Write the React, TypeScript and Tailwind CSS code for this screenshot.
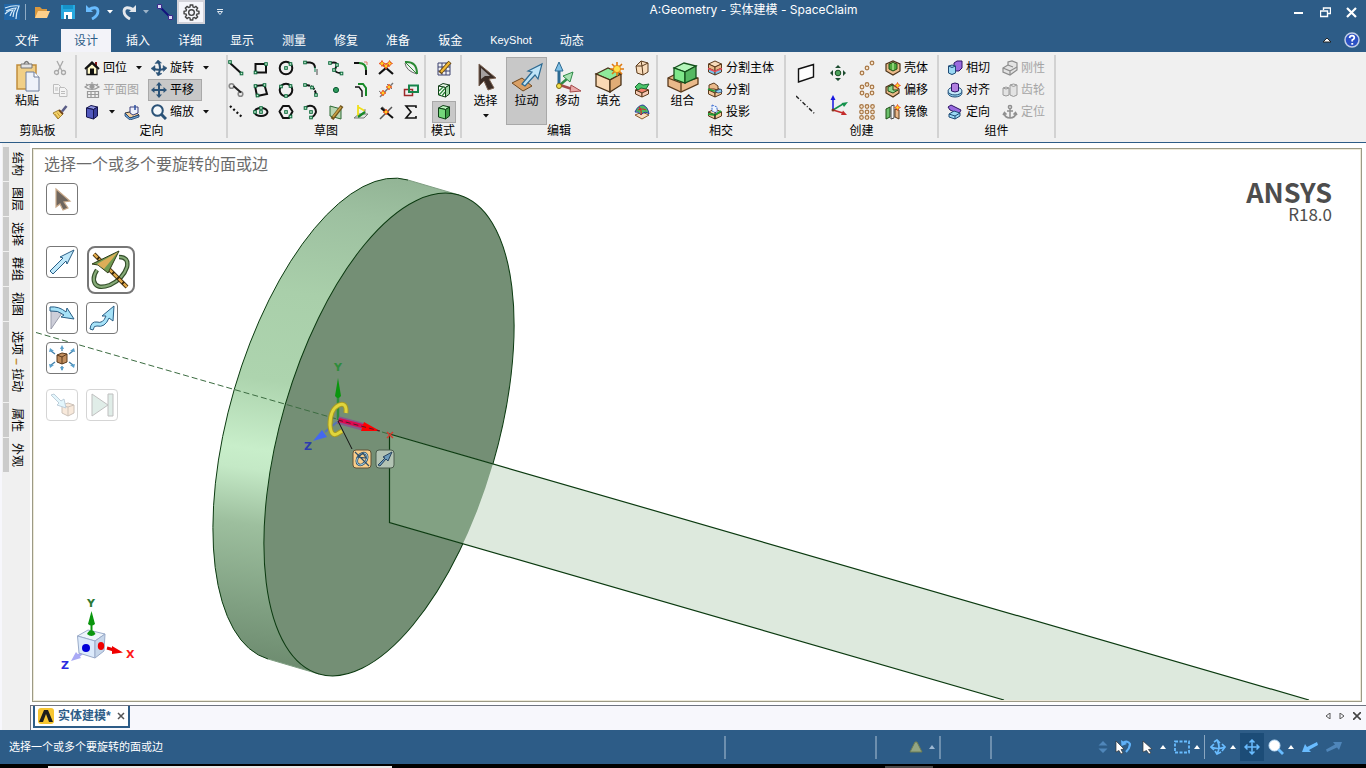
import type { ReactNode } from 'react';
import clsx from 'clsx';

const SANS = "font-['Liberation_Sans','Noto_Sans_CJK_SC',sans-serif]";

function Icon({ size = 16, box = 16, children }: { size?: number; box?: number; children: ReactNode }) {
  return (
    <svg width={size} height={size} viewBox={`0 0 ${box} ${box}`} fill="none" className="shrink-0" aria-hidden="true">
      {children}
    </svg>
  );
}

function Caret({ up = false, color = '#111' }: { up?: boolean; color?: string }) {
  return (
    <svg width="6" height="4" viewBox="0 0 6 4" className="shrink-0" aria-hidden="true">
      <path d={up ? 'M0 4L3 0L6 4Z' : 'M0 0H6L3 3.5Z'} fill={color} />
    </svg>
  );
}

// small green handle used by the sketch tools
function Dot({ x, y }: { x: number; y: number }) {
  return <rect x={x - 1.3} y={y - 1.3} width="2.6" height="2.6" fill="#c9efd5" stroke="#0d6b3c" strokeWidth="1" />;
}

function Spark({ x, y }: { x: number; y: number }) {
  return (
    <g>
      <path d={`M${x} ${y - 3}L${x + 1} ${y - 1}L${x + 3} ${y}L${x + 1} ${y + 1}L${x} ${y + 3}L${x - 1} ${y + 1}L${x - 3} ${y}L${x - 1} ${y - 1}Z`} fill="#ffd21f" stroke="#e8431c" strokeWidth=".8" />
    </g>
  );
}

function Cube({ top, left, right, stroke }: { top: string; left: string; right: string; stroke: string }) {
  return (
    <g stroke={stroke} strokeLinejoin="round">
      <path d="M2.500 4L7 1.500L13.500 3L9.500 5.500Z" fill={top} />
      <path d="M2.500 4L9.500 5.500V15L2.500 13Z" fill={left} />
      <path d="M9.500 5.500L13.500 3V12L9.500 15Z" fill={right} />
    </g>
  );
}

function Box({ fill = '#f3c79b', top = '#f8dcbc', y = 0 }: { fill?: string; top?: string; y?: number }) {
  return (
    <g stroke="#5a3a1c" strokeLinejoin="round" transform={`translate(0 ${y})`}>
      <path d="M1.500 4L8 1L14.500 4L8 7Z" fill={top} />
      <path d="M1.500 4V8L8 11V7Z" fill={fill} />
      <path d="M14.500 4V8L8 11V7Z" fill={fill} />
    </g>
  );
}

const icons = {
  home: (
    <>
      <path d="M11 2H13V6H11Z" fill="#8a1717" />
      <path d="M3 8V14.500H13V8L8 3.500Z" fill="#fff8c8" stroke="#111" strokeWidth="1.300" />
      <path d="M1 9L8 2.200L15 9" stroke="#111" strokeWidth="1.800" />
      <path d="M6 14V8.500H10V14Z" fill="#111" />
    </>
  ),
  plan: (
    <g stroke="#9a9a9a" strokeWidth="1.200">
      <path d="M1 5Q8 -1 15 5Q8 10 1 5Z" />
      <path d="M2 2L4 3.500M8 0V1.500M14 2L12 3.500" />
      <circle cx="8" cy="4.500" r="2" fill="#9a9a9a" />
      <path d="M3.500 9.500H14.500V15.500H3.500ZM3.500 12.500H14.500M7 9.500V15.500M11 9.500V15.500" />
    </g>
  ),
  cube: <Cube top="#8d93e0" left="#5158bd" right="#3a3f9c" stroke="#15154e" />,
  planeBook: (
    <>
      <path d="M1 9L10 7L15 11L6 14Z" fill="#f3cf9c" stroke="#333" />
      <path d="M1 9V12L6 16L15 13V11L6 14Z" fill="#6fa6d6" stroke="#1f3b66" strokeWidth=".8" />
      <path d="M6 9V3H14V9L9 11Z" fill="#eef0fb" stroke="#3a3f7c" />
      <path d="M11 1V6" stroke="#2b50a0" strokeWidth="1.500" />
    </>
  ),
  rotate: (
    <g stroke="#2a5277" strokeWidth="2">
      <path d="M2 8.500Q8 11 14 8.500" />
      <path d="M7.500 2Q10.500 8 7.500 14" />
      <path d="M0 8.500L4 5.500V11.500Z" fill="#2a5277" strokeWidth=".5" />
      <path d="M16 8L12 5.500L12.500 11.500Z" fill="#2a5277" strokeWidth=".5" />
      <path d="M4 3.500L7 0L10.500 3Z" fill="#2a5277" strokeWidth=".5" />
      <path d="M5 12.500L7 16L11 13.500Z" fill="#2a5277" strokeWidth=".5" />
    </g>
  ),
  pan: (
    <g fill="#2a5277">
      <path d="M7 2H9V14H7Z" />
      <path d="M2 7H14V9H2Z" />
      <path d="M8 0L11 3.500H5Z" />
      <path d="M8 16L5 12.500H11Z" />
      <path d="M0 8L3.500 5V11Z" />
      <path d="M16 8L12.500 11V5Z" />
    </g>
  ),
  zoom: (
    <>
      <circle cx="6.500" cy="6.500" r="5.300" fill="#f4f8fb" stroke="#2a5277" strokeWidth="2" />
      <path d="M10.500 10.500L15 15" stroke="#2a5277" strokeWidth="3" />
    </>
  ),
  scissors: (
    <g stroke="#a9a9a9" strokeWidth="1.300">
      <path d="M5 1L10 11M11 1L6 11" />
      <circle cx="4.500" cy="12.500" r="2" />
      <circle cx="11.500" cy="12.500" r="2" />
    </g>
  ),
  copy: (
    <g fill="#f4f4f4" stroke="#bdbdbd">
      <path d="M1.500 2.500H6.500L8.500 4.500V11.500H1.500Z" />
      <path d="M7.500 5.500H12.500L15 8V14.500H7.500Z" />
      <path d="M9 9.500H13M9 11.500H13M3 6H6M3 8H6" />
    </g>
  ),
  brush: (
    <>
      <path d="M1 9L7 6L11 10L6 15Z" fill="#f4d26b" stroke="#8a6a1c" strokeWidth=".8" />
      <path d="M3 10L6 14M5 8.500L8 12.500" stroke="#b88a20" strokeWidth=".8" />
      <path d="M7 6L11 10" stroke="#6b3f1a" strokeWidth="1.800" />
      <path d="M10 7.500L14.500 2" stroke="#5a5d86" strokeWidth="2.600" />
    </>
  ),
};

const sketchIcons: ReactNode[] = [
  // row 1
  <><path d="M2 3L14 14" stroke="#111" strokeWidth="2" /><Dot x={2} y={2} /><Dot x={13.500} y={13.500} /></>,
  <><path d="M2.500 4H13V12.500H2.500Z" stroke="#111" strokeWidth="2" /><Dot x={2.500} y={12.500} /><Dot x={13} y={4} /></>,
  <><circle cx="8" cy="8" r="6.300" stroke="#111" strokeWidth="2" /><Dot x={8} y={8} /><Dot x={12.500} y={4} /></>,
  <><path d="M2 2.500H7Q12 3 12 8" stroke="#111" strokeWidth="2" /><path d="M14 9V15" stroke="#888" strokeWidth="1.600" /><Dot x={2} y={2.500} /><path d="M12 7V12" stroke="#0d7b4c" /></>,
  <><path d="M2 3Q11 1 8 7Q5 13 13 13" stroke="#111" strokeWidth="1.800" /><Dot x={2} y={3} /><Dot x={9} y={5} /><Dot x={6} y={10} /><Dot x={13.500} y={13.500} /></>,
  <><path d="M1 3H7" stroke="#111" strokeWidth="2" /><path d="M6 3Q13 3 13 10" stroke="#188a28" strokeWidth="2" /><path d="M13 10V15" stroke="#111" strokeWidth="2" /><path d="M11 2H14V5" stroke="#d87c6c" /></>,
  <><path d="M1 14L8 8L15 14" stroke="#111" strokeWidth="2.200" /><path d="M3 2L8 8L13 2" stroke="#8a4a1a" strokeWidth="1.200" /><Spark x={4} y={3.500} /><Spark x={11.500} y={3.500} /><Spark x={8} y={6} /></>,
  <><path d="M2 3Q3 11 14 14" stroke="#666" /><path d="M2 2Q14 1 14 14" stroke="#2b8a34" strokeWidth="2" /><path d="M2 2L14 14" stroke="#2b8a34" /></>,
  // row 2
  <><circle cx="3.500" cy="4" r="2.300" stroke="#888" strokeWidth="1.600" /><circle cx="12.500" cy="12" r="2.300" stroke="#888" strokeWidth="1.600" /><path d="M5.500 4L13 10.500" stroke="#222" strokeWidth="2" /></>,
  <><path d="M2 4L11.500 3L14 12L4 14Z" stroke="#111" strokeWidth="2" /><Dot x={2.500} y={4} /><Dot x={11.500} y={3} /><Dot x={4.500} y={13.500} /></>,
  <><circle cx="8" cy="8" r="6.300" stroke="#111" strokeWidth="2" /><Dot x={3} y={4.500} /><Dot x={12.500} y={4} /><Dot x={8} y={14} /></>,
  <><path d="M2 3Q12 3 13 13" stroke="#111" strokeWidth="2" strokeDasharray="5 1" /><Dot x={2} y={3} /><Dot x={9} y={5.500} /><Dot x={13} y={13} /></>,
  <circle cx="8" cy="8" r="2.600" fill="#2f9a5c" stroke="#0d5b34" />,
  <><path d="M2 5H6L9 9V15" stroke="#111" strokeWidth="1.400" /><path d="M5 2H10L13 6V14" stroke="#188a28" strokeWidth="2" /></>,
  <><path d="M2 15L15 1" stroke="#777" strokeWidth="1.400" /><path d="M1 9L6 13M9 2L14 7" stroke="#777" /><Spark x={5} y={11} /><Spark x={11} y={5} /></>,
  <><path d="M1.500 7.500H9.500V13.500H1.500Z" stroke="#9c2a2a" strokeWidth="1.500" /><path d="M6 3.500H15V10H6Z" stroke="#16854a" strokeWidth="2" /></>,
  // row 3
  <path d="M2 2L15 14" stroke="#111" strokeWidth="2.200" strokeDasharray="2 2.500" />,
  <><ellipse cx="8" cy="8" rx="6.500" ry="4" stroke="#111" strokeWidth="2" /><Dot x={2} y={8} /><Dot x={8} y={8} /><Dot x={8} y={4} /></>,
  <><path d="M5 2H11L14.500 7.500L11 14H5L1.500 7.500Z" stroke="#111" strokeWidth="2" strokeLinejoin="round" /><Dot x={8} y={8} /><Dot x={12.500} y={12.500} /></>,
  <><path d="M2 4Q6 0 11 3Q16 9 8 14" stroke="#111" strokeWidth="2" /><Dot x={2.500} y={4} /><Dot x={8} y={8} /><Dot x={8} y={13.500} /></>,
  <><path d="M2 2L13 5V15L2 12Z" fill="#b9d6b2" stroke="#2d6a34" /><path d="M4 15L14 2" stroke="#70551c" strokeWidth="3.600" /><path d="M5 13L13 3" stroke="#c9a145" strokeWidth="1.600" /></>,
  <><path d="M1 14L6 10H15L11 14Z" fill="#dfe6df" stroke="#777" /><path d="M5 1V12M5 3L12 7" stroke="#f0e018" strokeWidth="1.800" /><path d="M12 5V9" stroke="#888" /><path d="M5 13L12 8" stroke="#188a28" strokeWidth="2.200" /></>,
  <><path d="M2 15L14 3M4 3L9 8" stroke="#555" strokeWidth="1.500" /><path d="M3 4L15 14" stroke="#111" strokeWidth="2" /><Spark x={8} y={8} /></>,
  <path d="M13 4V2H3L8 8L3 14H13V12" stroke="#111" strokeWidth="1.600" />,
];

const modeIcons: ReactNode[] = [
  <>
    <path d="M2 3H14V15H2ZM2 7H14M2 11H14M6 3V15M10 3V15" stroke="#3d4270" />
    <path d="M4 13L14 2" stroke="#6b4a12" strokeWidth="4" />
    <path d="M5 12L13.500 2.500" stroke="#f3bb36" strokeWidth="2.200" />
  </>,
  <>
    <Cube top="#e4f3e4" left="#ffffff" right="#9fd7a4" stroke="#123d18" />
    <path d="M3 9L7 5M3 13L9 6.500M6 14L9 10" stroke="#2d8a3a" strokeWidth="1.300" />
  </>,
  <Cube top="#baf3bd" left="#74d67b" right="#3f9a48" stroke="#0f4016" />,
];

function Group({ label, className, children }: { label: string; className: string; children: ReactNode }) {
  return (
    <section className={clsx('flex shrink-0 flex-col border-r-2 border-[#d2d2d2] pt-[2px]', className)}>
      <div className="flex h-[68px] items-start">{children}</div>
      <h2 className="text-center text-xs leading-[13px]">{label}</h2>
    </section>
  );
}

function SmallButton({ icon, label, disabled, active, menu }: { icon: ReactNode; label?: string; disabled?: boolean; active?: boolean; menu?: boolean }) {
  return (
    <div className="flex h-[22px] items-center">
      <button
        type="button"
        disabled={disabled}
        aria-label={label ? undefined : 'Tool'}
        className={clsx(
          'flex h-[22px] items-center gap-[3px] whitespace-nowrap border pl-[2px]',
          'text-xs',
          active ? 'border-[#a9a9a9] bg-[#c8c8c8] pr-[7px]' : 'border-transparent pr-[2px]',
          disabled && 'text-[#a5a5a5]'
        )}
      >
        <Icon>{icon}</Icon>
        {label}
      </button>
      {menu && (
        <button type="button" aria-label="More" className="px-[6px]">
          <Caret />
        </button>
      )}
    </div>
  );
}

function BigButton({ icon, label, active, menu }: { icon: ReactNode; label: string; active?: boolean; menu?: boolean }) {
  return (
    <button
      type="button"
      className={clsx('flex h-[68px] w-[41px] flex-col items-center border pt-[3px] text-xs leading-4', active ? 'border-[#a9a9a9] bg-[#c8c8c8]' : 'border-transparent')}
    >
      <Icon size={32} box={32}>
        {icon}
      </Icon>
      {label}
      {menu && (
        <span className="pt-[5px]">
          <Caret />
        </span>
      )}
    </button>
  );
}

function TitleBar() {
  return (
    <header className="flex h-6 items-center bg-[#2d5c87] text-white">
      <div className="flex flex-1 items-center">
        <span className="ml-1">
          <Icon>
            <path d="M0 0H16V16H0Z" fill="#2167a8" />
            <path d="M1 4Q9 1 15 2Q12 9 12 15M2 7Q8 4 12 4Q9 8 9 13M1 10Q5 6 9 6Q7 9 6 12" stroke="#d6ecfb" strokeWidth="1.200" />
          </Icon>
        </span>
        <span className="ml-[5px] h-4 w-px bg-[#8fabc4]" />
        <button type="button" aria-label="Open" className="ml-2">
          <Icon>
            <path d="M1 3H6L8 5H13V14H1Z" fill="#d9983e" />
            <path d="M4 7H16L13 14H1Z" fill="#ffd08a" />
          </Icon>
        </button>
        <button type="button" aria-label="Save" className="ml-[10px]">
          <Icon>
            <path d="M1 1H15V15H1Z" fill="#26a9e0" />
            <path d="M4 8H12V15H4Z" fill="#fff" />
            <path d="M6 11H8V15H6Z" fill="#1c6c96" />
            <path d="M3 1H13V5H3Z" fill="#1692c8" />
          </Icon>
        </button>
        <button type="button" aria-label="Undo" className="ml-[9px]">
          <Icon>
            <path d="M3 6Q12 1 13 7Q13 12 7 15" stroke="#69bcff" strokeWidth="2.800" />
            <path d="M1 1V8H8Z" fill="#69bcff" />
          </Icon>
        </button>
        <span className="ml-[6px]"><Caret color="#fff" /></span>
        <button type="button" aria-label="Redo" className="ml-2">
          <Icon>
            <path d="M13 6Q4 1 3 7Q3 12 9 15" stroke="#e3e7ec" strokeWidth="2.800" />
            <path d="M15 1V8H8Z" fill="#e3e7ec" />
          </Icon>
        </button>
        <span className="ml-[6px]"><Caret color="#9db4c9" /></span>
        <button type="button" aria-label="Line" className="ml-2">
          <Icon>
            <path d="M3 3L13 13" stroke="#12127c" strokeWidth="2" />
            <path d="M.5 .5H4.500V4.500H.5ZM11.500 11.500H15.500V15.500H11.500Z" fill="#dcd8f4" stroke="#3b2b8c" />
          </Icon>
        </button>
        <button type="button" aria-label="Options" className="ml-1 flex h-6 w-7 items-center justify-center border-2 border-[#d3d3da] bg-[#f5f6fb]">
          <svg width="17" height="17" viewBox="0 0 24 24" fill="none" stroke="#444" strokeWidth="2" aria-hidden="true">
            <path d="M10.300 2.500h3.400l.5 2.800 1.700.7 2.300-1.600 2.400 2.400-1.600 2.300.7 1.700 2.800.5v3.400l-2.800.5-.7 1.700 1.600 2.300-2.400 2.400-2.300-1.600-1.700.7-.5 2.800h-3.400l-.5-2.800-1.700-.7-2.300 1.600-2.400-2.400 1.600-2.300-.7-1.700-2.800-.5v-3.400l2.800-.5.7-1.700-1.600-2.300 2.400-2.400 2.300 1.600 1.700-.7z" transform="translate(0 -1)" />
            <circle cx="12" cy="12" r="4" />
          </svg>
        </button>
        <span className="ml-3">
          <svg width="6" height="6" viewBox="0 0 6 6" aria-hidden="true">
            <path d="M0 .5H6" stroke="#dfe8f0" />
            <path d="M.5 2.500H5.500L3 5.500Z" fill="none" stroke="#dfe8f0" />
          </svg>
        </span>
      </div>
      <h1 className="pb-1 pl-[150px] text-xs font-['Inter','Noto_Sans_CJK_SC',sans-serif]">A:Geometry - 实体建模 - SpaceClaim</h1>
      <div className="flex flex-1 items-center justify-end gap-[15px] pr-[9px]">
        <button type="button" aria-label="Minimize">
          <Icon size={11} box={11}><path d="M0 6H9" stroke="#fff" strokeWidth="2" /></Icon>
        </button>
        <button type="button" aria-label="Restore">
          <Icon size={11} box={11}><path d="M3.500 3V1H10.500V6.500H8M.5 4H7.500V9.500H.5Z" stroke="#fff" strokeWidth="1.400" /></Icon>
        </button>
        <button type="button" aria-label="Close">
          <Icon size={11} box={11}><path d="M1 1L10 10M10 1L1 10" stroke="#fff" strokeWidth="2.200" /></Icon>
        </button>
      </div>
    </header>
  );
}

const menuTabs = ['设计', '插入', '详细', '显示', '测量', '修复', '准备', '钣金', 'KeyShot', '动态'];

function MenuTabs() {
  return (
    <nav className="flex h-7 items-end bg-[#2d5c87] text-xs text-white">
      <button type="button" className="ml-[2px] mr-[9px] h-[23px] px-[13px]">文件</button>
      <div className="flex flex-1 gap-[2px]">
        {menuTabs.map((tab) => (
          <button
            key={tab}
            type="button"
            className={clsx(
              'h-[23px] whitespace-nowrap px-[13px]',
              tab === 'KeyShot' && 'text-[11px]',
              tab === '设计' && 'bg-[#f3f3f9] text-[#2d5c87]'
            )}
          >
            {tab}
          </button>
        ))}
      </div>
      <div className="flex h-6 items-center gap-3 pr-[6px]">
        <Icon size={10} box={10}><path d="M1 7L5 3L9 7Z" fill="#fff" stroke="#222" /></Icon>
        <button type="button" aria-label="Help">
          <Icon>
            <circle cx="8" cy="8" r="7" fill="#2b50c4" stroke="#c3cfe6" strokeWidth="1.500" />
            <path d="M5.500 6Q6 3.500 8.200 3.700Q10.500 4 10.300 6Q10 7.300 8.200 8V9.500" stroke="#fff" strokeWidth="1.700" />
            <path d="M7.300 11H9.200V12.700H7.300Z" fill="#fff" />
          </Icon>
        </button>
      </div>
    </nav>
  );
}

const circlePattern = (points: number[][]) => (
  <g fill="#f7e3cc" stroke="#a87846" strokeWidth="1.200">
    {points.map(([x, y]) => (
      <circle key={`${x}-${y}`} cx={x} cy={y} r="1.800" />
    ))}
  </g>
);

function Ribbon() {
  return (
    <div className="flex overflow-hidden border-b border-[#2d5c87] bg-[#f0f0f0] pb-1 pt-[3px] text-black">
      <Group label="剪贴板" className="w-[77px]">
        <button type="button" className="ml-[9px] flex h-[68px] w-9 flex-col items-center pt-[2px] text-xs leading-4">
          <Icon size={34} box={34}>
            <path d="M7 6H26V30H7Z" fill="#f1cf86" stroke="#c08d3c" strokeWidth="1.500" />
            <path d="M11 5H22V9H11Z" fill="#e4e4e4" stroke="#777" />
            <path d="M14 5Q16.500 0 19 5" stroke="#777" strokeWidth="1.500" />
            <path d="M16 13H24L29 18V32H16Z" fill="#eef2fa" stroke="#6d7c9c" />
            <path d="M24 13V18H29" fill="#fff" stroke="#6d7c9c" />
          </Icon>
          粘贴
        </button>
        <div className="ml-1 flex flex-col">
          <SmallButton icon={icons.scissors} disabled />
          <SmallButton icon={icons.copy} disabled />
          <SmallButton icon={icons.brush} />
        </div>
      </Group>

      <Group label="定向" className="w-[151px]">
        <div className="ml-1 flex w-[67px] shrink-0 flex-col">
          <SmallButton icon={icons.home} label="回位" menu />
          <SmallButton icon={icons.plan} label="平面图" disabled />
          <div className="flex">
            <SmallButton icon={icons.cube} menu />
            <SmallButton icon={icons.planeBook} />
          </div>
        </div>
        <div className="flex flex-col">
          <SmallButton icon={icons.rotate} label="旋转" menu />
          <SmallButton icon={icons.pan} label="平移" active />
          <SmallButton icon={icons.zoom} label="缩放" menu />
        </div>
      </Group>

      <Group label="草图" className="w-[198px]">
        <div className="grid grid-cols-8 gap-x-[9px]">
          {sketchIcons.map((icon, i) => (
            <button key={i} type="button" aria-label="Sketch tool" className="flex h-[22px] w-4 items-center">
              <Icon>{icon}</Icon>
            </button>
          ))}
        </div>
      </Group>

      <Group label="模式" className="w-9">
        <div className="ml-auto mr-1 flex flex-col">
          {modeIcons.map((icon, i) => (
            <button
              key={i}
              type="button"
              aria-label="Mode"
              className={clsx('flex h-[22px] w-6 items-center justify-center border', i === 2 ? 'border-[#a9a9a9] bg-[#c8c8c8]' : 'border-transparent')}
            >
              <Icon>{icon}</Icon>
            </button>
          ))}
        </div>
      </Group>

      <Group label="编辑" className="w-[196px]">
        <div className="flex pl-[3px]">
          <BigButton
            label="选择"
            menu
            icon={
              <>
                <path d="M9 3L26 17L19 18L24 27L18 29L14 20L9 25Z" fill="#3a2c26" stroke="#7b6252" />
                <path d="M11 7L20 15L15 15L11 18Z" fill="#a49f9f" />
              </>
            }
          />
          <BigButton
            label="拉动"
            active
            icon={
              <>
                <path d="M1 22L11 17L21 25L12 30Z" fill="#d9a066" stroke="#6f4a22" />
                <path d="M11 23L21 11L17 10L31 3L27 18L24 14L14 25Z" fill="#bfe4f7" stroke="#2c6a92" strokeWidth="1.200" />
              </>
            }
          />
          <BigButton
            label="移动"
            icon={
              <>
                <path d="M7 25V8" stroke="#2c6a92" strokeWidth="3" />
                <path d="M3 10L7 1L11 10Z" fill="#7fc0e6" stroke="#2c6a92" />
                <path d="M8 24L16 17" stroke="#2e8a48" strokeWidth="2.400" />
                <path d="M11 15L21 11L18 21Z" fill="#a9e2b3" stroke="#2e8a48" />
                <path d="M8 24L20 28" stroke="#a34a4a" strokeWidth="2.400" />
                <path d="M19 24L29 30L18 31Z" fill="#eba9a9" stroke="#a34a4a" />
                <circle cx="7" cy="25" r="2.500" fill="#f3e04a" stroke="#7c6b14" />
              </>
            }
          />
          <BigButton
            label="填充"
            icon={
              <>
                <path d="M3 13L15 7L28 13L17 19Z" fill="#8fe99a" stroke="#4a3218" strokeWidth="1.300" />
                <path d="M3 13V25L17 31V19Z" fill="#fad9b4" stroke="#4a3218" strokeWidth="1.300" />
                <path d="M28 13V24L17 31V19Z" fill="#e0ac76" stroke="#4a3218" strokeWidth="1.300" />
                <path d="M24 1V15M17 8H31M19 3L29 13M29 3L19 13" stroke="#e07a10" strokeWidth="1.600" />
                <circle cx="24" cy="8" r="3.600" fill="#ffe04a" stroke="#e88a14" />
              </>
            }
          />
        </div>
        <div className="ml-[2px] flex flex-col">
          <SmallButton icon={<><path d="M2 6L7 1L14 3V12L9 15L3 13Z" fill="#f8dcbc" stroke="#5a3a1c" strokeLinejoin="round" /><path d="M2 6L8 6L14 3M8 6L9 15M7 1L8 6" stroke="#5a3a1c" /></>} />
          <SmallButton icon={<><Box y={4} fill="#f6c9b4" top="#f0806c" /><path d="M1 5L5 1L9 3L15 2L12 7L7 6L4 8Z" fill="#4ac46a" stroke="#1c6b34" /></>} />
          <SmallButton icon={<><path d="M1 11L8 8L15 11L8 15Z" fill="#f8dcbc" stroke="#8a5a2c" /><path d="M1 8Q4 1 9 1Q14 3 15 10Q11 6 7 11Q5 7 1 8Z" fill="#4ab860" stroke="#283c9c" /><path d="M4 6Q8 4 12 6M5 3Q8 6 7 11" stroke="#d02c2c" strokeWidth="1.200" /></>} />
        </div>
      </Group>

      <Group label="相交" className="w-32">
        <div className="pl-1">
          <BigButton
            label="组合"
            icon={
              <>
                <path d="M1 17L7 14L31 17V23L14 31L1 25Z" fill="#eab98a" stroke="#5a3a1c" strokeWidth="1.300" />
                <path d="M1 17L14 22V31M14 22L31 17" stroke="#5a3a1c" strokeWidth="1.300" />
                <path d="M7 7L17 2L29 5L18 11Z" fill="#b4f5ba" stroke="#14501c" strokeWidth="1.300" />
                <path d="M7 7V18L18 22V11Z" fill="#7fe78a" stroke="#14501c" strokeWidth="1.300" />
                <path d="M29 5V17L18 22V11Z" fill="#56b862" stroke="#14501c" strokeWidth="1.300" />
              </>
            }
          />
        </div>
        <div className="ml-[1px] flex flex-col">
          <SmallButton label="分割主体" icon={<><Box y={4} fill="#7cc4ee" top="#e8606a" /><Box y={0} fill="#eab98a" /><path d="M1 8.500L8 11.500L15 8.500" stroke="#e8505a" strokeWidth="1.500" /></>} />
          <SmallButton label="分割" icon={<><Box y={4} /><path d="M2 3L7 1L11 4V8L7 7L2 7Z" fill="#eab98a" stroke="#5a3a1c" /><path d="M1 7L7 9L14 9" stroke="#1ca034" strokeWidth="1.600" /><path d="M8 9L14 7L15 10L11 11Z" fill="#8fd0f4" stroke="#1f3b66" strokeWidth=".7" /></>} />
          <SmallButton label="投影" icon={<><Box y={4} /><path d="M5 1L10 3V9L5 7Z" fill="#eef6ff" stroke="#3b6bd0" strokeDasharray="2 1" /><path d="M1 10L8 11L14 7" stroke="#1ca034" strokeWidth="2" /><path d="M8 8V15" stroke="#222" /></>} />
        </div>
      </Group>

      <Group label="创建" className="w-[153px]">
        <div className="grid grid-cols-2 gap-x-[12px] gap-y-[12px] pl-[10px] pt-[6px]">
          <button type="button" aria-label="Plane"><Icon size={20} box={20}><path d="M2.500 6L17.500 1.500V14L2.500 19Z" fill="#fdfdfd" stroke="#111" strokeWidth="1.400" /></Icon></button>
          <button type="button" aria-label="Point">
            <Icon size={20} box={20}>
              <circle cx="10" cy="10" r="2.800" fill="#4ca45c" stroke="#174c20" />
              <path d="M10 2L13 5H7ZM10 18L7 15H13ZM2 10L5 7V13ZM18 10L15 13V7Z" fill="#1d4c30" />
            </Icon>
          </button>
          <button type="button" aria-label="Axis"><Icon size={20} box={20}><path d="M0 1L19 19" stroke="#222" strokeWidth="1.400" strokeDasharray="4 2 1 2" /></Icon></button>
          <button type="button" aria-label="Origin">
            <Icon size={20} box={20}>
              <path d="M5 15V4" stroke="#1616e0" strokeWidth="1.500" />
              <path d="M5 0L7.500 5H2.500Z" fill="#1616e0" />
              <path d="M5 15L15 9" stroke="#14924c" strokeWidth="1.500" />
              <path d="M20 7L16 12L13.500 8Z" fill="#14924c" />
              <path d="M5 15L15 18" stroke="#c42c2c" strokeWidth="1.500" />
              <path d="M19 20L13 20L15 15.500Z" fill="#c42c2c" />
              <circle cx="5" cy="15" r="1.500" fill="#7a3a1c" />
            </Icon>
          </button>
        </div>
        <div className="ml-2 flex flex-col">
          <SmallButton icon={circlePattern([[3, 13], [8, 8], [13, 3]])} />
          <SmallButton icon={circlePattern([[8, 2.500], [13, 5], [13, 11], [8, 13.500], [3, 11], [3, 5]])} />
          <SmallButton icon={circlePattern([[2.500, 2.500], [8, 2.500], [13.500, 2.500], [2.500, 8], [8, 8], [13.500, 8], [2.500, 13.500], [8, 13.500], [13.500, 13.500]])} />
        </div>
        <div className="ml-1 flex flex-col">
          <SmallButton label="壳体" icon={<><path d="M1 4L8 1L15 4V11L8 15L1 11Z" fill="#eab98a" stroke="#4a3218" strokeWidth="1.200" /><path d="M4 4L8 2.500L12 4V9L8 11L4 9Z" fill="#4fa83c" stroke="#1e5016" /><path d="M8 3V10" stroke="#a4e08c" strokeWidth="1.500" /></>} />
          <SmallButton label="偏移" icon={<><path d="M1 5L7 2L14 7V11L8 15L1 11Z" fill="#eab98a" stroke="#4a3218" strokeWidth="1.200" /><path d="M3 5L8 3V8L13 8L8 11L3 9Z" fill="#8fd68c" stroke="#1e5016" /><Spark x={12.500} y={3.500} /></>} />
          <SmallButton label="镜像" icon={<><path d="M1 5L5 3V13L1 15Z" fill="#6cc06c" stroke="#1e5016" /><path d="M6 2L9 1V14L6 15Z" fill="#f5f5f5" stroke="#444" /><path d="M10 5L14 6V15L10 13Z" fill="#eab98a" stroke="#5a3a1c" /><Spark x={12.500} y={3.500} /></>} />
        </div>
      </Group>

      <Group label="组件" className="w-[117px]">
        <div className="ml-[5px] flex flex-col">
          <SmallButton label="相切" icon={<><path d="M7 3L10 1H15V8L12 11H7Z" fill="#9a6be0" stroke="#2c1464" /><path d="M1.500 6V13Q5 16 8.500 13V6Q5 4 1.500 6Z" fill="#9ad8f4" stroke="#1f4b76" /><path d="M1.500 6Q5 9 8.500 6" stroke="#1f4b76" /></>} />
          <SmallButton label="对齐" icon={<><ellipse cx="8" cy="11" rx="7" ry="4" fill="#9ad8f4" stroke="#1f4b76" /><ellipse cx="8" cy="9" rx="7" ry="4" fill="#c4eafa" stroke="#1f4b76" /><path d="M4.500 2V9Q8 11 11.500 9V2Q8 0 4.500 2Z" fill="#b27fe0" stroke="#2c1464" /></>} />
          <SmallButton label="定向" icon={<><path d="M1 3L4 1L14 6L12 10L3 6Z" fill="#9a6be0" stroke="#2c1464" /><path d="M2 10L7 7L13 9V12L8 15L2 13Z" fill="#9ad8f4" stroke="#1f4b76" /><path d="M2 10L8 12L13 9M8 12V15" stroke="#1f4b76" /></>} />
        </div>
        <div className="ml-[6px] flex flex-col">
          <SmallButton disabled label="刚性" icon={<><path d="M1 8L6 5V2L10 1L15 3V10L8 15L1 12Z" fill="#e3e3e3" stroke="#8c8c8c" strokeWidth="1.200" /><path d="M1 8L8 11V15M8 11L15 7M6 5L11 7" stroke="#8c8c8c" strokeWidth="1.200" /></>} />
          <SmallButton disabled label="齿轮" icon={<g fill="#e3e3e3" stroke="#9a9a9a"><path d="M1 6V13Q4 15 7 13V6Q4 4 1 6Z" /><path d="M8 3V13Q11.500 16 15 13V3Q11.500 1 8 3Z" /><path d="M8 3Q11.500 6 15 3M1 6Q4 8 7 6" /></g>} />
          <SmallButton disabled label="定位" icon={<g stroke="#8f8f8f" strokeWidth="1.500"><circle cx="8" cy="3" r="1.600" /><path d="M8 5V14M5 7H11M2 9Q3 14 8 14Q13 14 14 9M1 11L2.500 8.500L4.500 10.500M15 11L13.500 8.500L11.500 10.500" /></g>} />
        </div>
      </Group>
    </div>
  );
}

const sideTabs = ['结构', '图层', '选择', '群组', '视图', '选项 - 拉动', '属性', '外观'];

function SidePanelTabs() {
  return (
    <aside className="flex w-[30px] shrink-0 flex-col gap-[1px] border-l-2 border-[#f7f7fc] bg-[#f0f0f0] pl-[1px] pt-1">
      {sideTabs.map((tab) => (
        <button
          key={tab}
          type="button"
          className={clsx('flex border-l-[6px] border-[#cbcbcb] pr-[5px]', tab.length > 2 ? 'h-20' : 'h-[34px]')}
        >
          <span className="m-auto whitespace-pre text-xs leading-4 [text-orientation:sideways] [writing-mode:vertical-rl]">
            {tab.split('-').map((part, i) => (
              <span key={part}>
                {i > 0 && <b className="text-[#c48a30]">–</b>}
                {part}
              </span>
            ))}
          </span>
        </button>
      ))}
    </aside>
  );
}

function ToolButton({ label, large, faded, children }: { label: string; large?: boolean; faded?: boolean; children: ReactNode }) {
  return (
    <button
      type="button"
      aria-label={label}
      className={clsx(
        'flex items-center justify-center border border-[#777] bg-white',
        large ? 'size-12 rounded-lg border-2' : 'size-8 rounded',
        faded && 'opacity-30'
      )}
    >
      <Icon size={large ? 40 : 28} box={large ? 40 : 28}>
        {children}
      </Icon>
    </button>
  );
}

function PullTools() {
  return (
    <div className="absolute left-3 top-[33px] flex flex-col gap-2">
      <div className="mb-[23px] flex">
        <ToolButton label="Select">
          <path d="M8 4L22 16L16 17L20 23L15 25L12 19L8 22Z" fill="#6f665e" stroke="#c9a989" strokeWidth="1.200" />
        </ToolButton>
      </div>
      <div className="flex gap-[9px]">
        <ToolButton label="Pull">
          <path d="M2 23L15 10L12 9L26 2L19 16L18 13L5 26Z" fill="#bfe8fa" stroke="#2a5f86" />
        </ToolButton>
        <ToolButton label="Revolve" large>
          <path d="M28 7Q38 7 36 17Q32 29 19 35Q5 40 3 31Q2 26 6 20" stroke="#35502c" strokeWidth="4.500" />
          <path d="M28 7Q38 7 36 17Q32 29 19 35Q5 40 3 31Q2 26 6 20" stroke="#86ab78" strokeWidth="2.200" />
          <path d="M3 4L36 37" stroke="#3c2a0c" strokeWidth="4" />
          <path d="M3 4L36 37" stroke="#e0a848" strokeWidth="2.400" strokeDasharray="5 2" />
          <path d="M28 1L1 14L7 15L17 23Z" fill="#6f9a52" stroke="#2f3a18" />
          <path d="M27 2L6 14L13 19Z" fill="#dcae58" />
        </ToolButton>
      </div>
      <div className="flex gap-2">
        <ToolButton label="Draft">
          <path d="M3 5L14 9L3 25Z" fill="#cdced9" stroke="#9a9cab" />
          <path d="M2 3Q11 2 18 8L19 4L26 15L13 13L16 11Q10 6 2 7Z" fill="#a6e2f8" stroke="#2a5f86" />
        </ToolButton>
        <ToolButton label="Sweep">
          <path d="M2 25Q3 17 9 18Q15 20 18 12L14 12L26 2L25 17L21 14Q17 24 9 22Q6 21 5 26Z" fill="#a6e2f8" stroke="#2a5f86" />
        </ToolButton>
      </div>
      <div className="flex">
        <ToolButton label="Scale">
          <path d="M9 11L14 9L19 10V18L14 20L9 18Z" fill="#c08d5e" stroke="#5a3a1c" />
          <path d="M9 11L14 13L19 10M14 13V20" stroke="#5a3a1c" />
          <path d="M14 7V3M14 22V26M7 10L3 7M21 10L25 7M7 18L3 21M21 18L25 21" stroke="#3f7ea8" strokeWidth="1.300" />
          <path d="M12 5L14 1L16 5ZM1 8L2 4L6 7ZM27 8L26 4L22 7ZM1 20L2 24L6 21ZM27 20L26 24L22 21ZM12 23L14 27L16 23Z" fill="#5aa0cc" />
        </ToolButton>
      </div>
      <div className="mt-[7px] flex gap-2">
        <ToolButton label="Up to" faded>
          <path d="M14 14L20 12L26 14V22L20 25L14 22Z" fill="#eab98a" stroke="#5a3a1c" />
          <path d="M14 14L20 16L26 14M20 16V25" stroke="#5a3a1c" />
          <path d="M3 4L11 12L9 14L18 17L16 8L13 10L6 3Z" fill="#a6e2f8" stroke="#2a5f86" />
        </ToolButton>
        <ToolButton label="Full pull" faded>
          <path d="M4 3V25L20 14Z" fill="#9cc4b4" stroke="#333" />
          <path d="M20 3H25V25H20Z" fill="#9cc4b4" stroke="#333" />
        </ToolButton>
      </div>
    </div>
  );
}

// The model: disc, revolve profile, axis and manipulators, in window coordinates
function Scene() {
  return (
    <svg className="absolute inset-0 h-full w-full" role="img" aria-label="Model view">
      <defs>
        <linearGradient id="rim" gradientUnits="userSpaceOnUse" x1="360" y1="175" x2="290" y2="672">
          <stop offset="0" stopColor="#93b596" />
          <stop offset=".08" stopColor="#9dc0a0" />
          <stop offset=".25" stopColor="#a9cfaa" />
          <stop offset=".43" stopColor="#add4ae" />
          <stop offset=".57" stopColor="#c8eeca" />
          <stop offset=".61" stopColor="#c4e9c6" />
          <stop offset=".72" stopColor="#9dbf9e" />
          <stop offset=".88" stopColor="#80a082" />
          <stop offset="1" stopColor="#6c8a6e" />
        </linearGradient>
        <clipPath id="face">
          <ellipse cx="389" cy="434.500" rx="108" ry="249.500" transform="rotate(16.3 389 434.500)" />
        </clipPath>
      </defs>
      <g transform="translate(-34 -150)" fill="none">
        <path d="M459 195L408 180A108 249.500 16.300 0 0 268 659L319 674Z" fill="url(#rim)" />
        <path d="M408 180A108 249.500 16.300 0 0 268 659" stroke="#0b3a10" />
        <path d="M408 180L459 195M268 659L319 674" stroke="#7f9e82" />
        <ellipse cx="389" cy="434.500" rx="108" ry="249.500" transform="rotate(16.3 389 434.500)" fill="#748f75" stroke="#0b3a10" />
        <path d="M389.500 434L1309 700H1004L389.500 522.500Z" fill="#dde9dd" />
        <path d="M389.500 434L1309 700H1004L389.500 522.500Z" fill="#82a183" clipPath="url(#face)" />
        <path d="M1309 700L389.500 434V522.500L1004 700" stroke="#0b3a10" strokeWidth="1.200" />
        <path d="M36 332.500L389 434" stroke="#3c6c41" strokeDasharray="6 3" />

        {/* revolve handle */}
        <path d="M338 420V395" stroke="#2f8c3c" strokeWidth="2.500" />
        <path d="M335 396L338 378L341 396Q338 400 335 396Z" fill="#0a960e" />
        <path d="M337 422L325 432" stroke="#5673b8" strokeWidth="2" />
        <path d="M313 441L322 430L327 437Z" fill="#4468ef" />
        <path d="M346 413Q347 402 339 405Q330 409 330 425Q331 437 337 434L342 431" stroke="#a69a26" strokeWidth="5" />
        <path d="M346 413Q347 402 339 405Q330 409 330 425Q331 437 337 434L342 431" stroke="#e0d53c" strokeWidth="3" />
        <path d="M338 420L364 427" stroke="#855b8b" strokeWidth="8" />
        <path d="M339 420L366 427" stroke="#e00850" strokeWidth="4" />
        <path d="M361 431L364 422L380 431Z" fill="#ff0000" />
        <path d="M338 420L380 431" stroke="#531b2b" strokeDasharray="5 3" />
        <path d="M338 421L352 449" stroke="#111" />
        <path d="M387 432L393 438M393 432L387 438" stroke="#d8392c" strokeWidth="1.400" />
        <g className="font-['DejaVu_Sans',sans-serif] text-[11px] font-bold">
          <text x="334" y="371" fill="#2f8c3c">Y</text>
          <text x="304" y="450" fill="#2c3cae">Z</text>
          <text x="87" y="607" fill="#2c7a34">Y</text>
          <text x="126" y="658" fill="#ff1a1a">X</text>
          <text x="61" y="669" fill="#2b2be0">Z</text>
        </g>
        <rect x="353" y="450" width="18" height="18" rx="3" fill="#fbcf8b" stroke="#5e5136" />
        <ellipse cx="362" cy="459" rx="4.500" ry="6.500" transform="rotate(35 362 459)" stroke="#2f4f68" strokeWidth="2.500" />
        <ellipse cx="362" cy="459" rx="4.500" ry="6.500" transform="rotate(35 362 459)" stroke="#a8d4ea" />
        <path d="M355 452L369 466M363 453L358 457L366 458Z" stroke="#2f4f68" strokeWidth="1.200" />
        <rect x="376" y="450" width="18" height="18" rx="3" fill="#b3c4b4" stroke="#4b5c4d" />
        <path d="M378 465L385 458L383 457L392 452L388 461L386 459L380 466Z" fill="#6c9cbc" stroke="#29445e" />

        {/* view triad */}
        <path d="M91.500 630V620" stroke="#0a960e" strokeWidth="2" />
        <path d="M88 624L91.500 611L95 624Q91.500 627 88 624Z" fill="#0a960e" />
        <path d="M107 648L114 650" stroke="#e00000" strokeWidth="3" />
        <path d="M112 646L123 652.500L112 654Z" fill="#f00000" />
        <path d="M83 652L77 657" stroke="#a9a9f5" strokeWidth="3" />
        <path d="M71 661L76 652L81 658Z" fill="#a9a9f5" />
        <g stroke="#9aabc9" strokeLinejoin="round">
          <path d="M77.500 636L88 630L105 634L95 641Z" fill="#eef4fb" />
          <path d="M77.500 636L95 641V658L79 653Z" fill="#dceafb" />
          <path d="M95 641L105 634L104 651L95 658Z" fill="#c6d6ea" />
        </g>
        <path d="M87 634Q91.500 626 95.500 634Q91.500 638 87 634Z" fill="#0a960e" />
        <circle cx="86" cy="648" r="4" fill="#0000d8" />
        <ellipse cx="101" cy="646" rx="3.200" ry="4" fill="#f00000" />
      </g>
    </svg>
  );
}

function Workspace() {
  return (
    <main className="flex min-w-0 flex-1 flex-col bg-white pt-[5px]">
      <div className="ml-[2px] mr-1 flex flex-1 border border-[#9c9a86]">
        <div className="relative flex-1 overflow-hidden border border-[#ece9d8] bg-white">
          <Scene />
          <p className="relative pl-[10px] pt-[1px] font-['Noto_Sans_CJK_SC',sans-serif] text-base leading-6 text-[#6b6b6b]">
            选择一个或多个要旋转的面或边
          </p>
          <PullTools />
          <div className="absolute right-7 top-[22px] flex flex-col items-end font-['Noto_Sans_CJK_SC',sans-serif] text-[#4d4d4d]">
            <div className="text-[27px] font-bold leading-10">ANSYS</div>
            <div className="-mt-2 text-[17px] leading-5">R18.0</div>
          </div>
        </div>
      </div>
      <div className="mt-[3px] flex h-[25px] border-l border-t border-[#6f7480] bg-[#f7f7fc]">
        <div className="ml-[2px] flex h-[22px] items-center gap-1 border-2 border-t-0 border-[#2d5c87] bg-white px-[3px]">
          <Icon>
            <rect width="16" height="16" rx="3" fill="#f7c531" />
            <path d="M1 14L6 2H10L15 14H11L8 6L5 14Z" fill="#1d1d1d" />
          </Icon>
          <span className="text-xs font-bold text-[#2d5c87]">实体建模*</span>
          <button type="button" aria-label="Close document" className="pl-[2px]">
            <Icon size={8} box={8}><path d="M1 1L7 7M7 1L1 7" stroke="#555" strokeWidth="1.500" /></Icon>
          </button>
        </div>
        <div className="flex flex-1 items-center justify-end gap-2 pb-[4px] pr-[5px]">
          <Icon size={6} box={6}><path d="M5 0V6L1 3Z" stroke="#555" /></Icon>
          <Icon size={6} box={6}><path d="M1 0V6L5 3Z" stroke="#555" /></Icon>
          <Icon size={8} box={8}><path d="M0 0L8 8M8 0L0 8" stroke="#444" strokeWidth="1.600" /></Icon>
        </div>
      </div>
    </main>
  );
}

function StatusBar() {
  return (
    <footer className="flex h-[34px] items-center bg-[#2d5c87] text-white">
      <p className="flex-1 pl-[9px] text-[11px]">选择一个或多个要旋转的面或边</p>
      <div className="h-[23px] w-[151px] border-l-2 border-[#6d8fae]" />
      <div className="flex h-[23px] w-16 items-center justify-end gap-[6px] border-l-2 border-[#6d8fae] pr-[4px]">
        <Icon size={14} box={14}><path d="M1 12L6 2H8L13 12Z" fill="#93a583" stroke="#6d7c52" /></Icon>
        <Caret up color="#9db8d2" />
      </div>
      <div className="h-[23px] w-[51px] border-l-2 border-[#6d8fae]" />
      <div className="flex h-[23px] w-[376px] items-center justify-end border-l-2 border-[#6d8fae] pr-6">
        <span className="mr-[6px]">
          <Icon size={12} box={16}><path d="M2 6L8 0L14 6ZM2 10L8 16L14 10Z" fill="#4f86ba" /></Icon>
        </span>
        <button type="button" aria-label="Undo selection">
          <Icon>
            <path d="M8 4Q13 1 15 5Q15 9 11 13" stroke="#5fb0f7" strokeWidth="2.200" />
            <path d="M6 1L6.500 7L12 5Z" fill="#5fb0f7" />
            <path d="M1 2L9 10L6 10.500L8 14L6 15L4 11.500L1 13Z" fill="#fff" stroke="#333" strokeWidth=".7" />
          </Icon>
        </button>
        <button type="button" aria-label="Select" className="ml-[9px] flex items-center gap-1">
          <Icon><path d="M3 2L12 10L8.500 10.500L11 14L9 15L6.500 11.500L3 13Z" fill="#fff" stroke="#333" strokeWidth=".7" /></Icon>
          <Caret up color="#fff" />
        </button>
        <button type="button" aria-label="Box select" className="ml-2 flex items-center gap-1">
          <Icon><path d="M1 2.500H15V13.500H1Z" stroke="#69bcff" strokeWidth="1.800" strokeDasharray="3 1.500" /></Icon>
          <Caret up color="#fff" />
        </button>
        <span className="ml-1 mr-[5px] h-6 w-px bg-[#8aa6c0]" />
        <button type="button" aria-label="Spin" className="flex items-center gap-1">
          <Icon>
            <g stroke="#69bcff" strokeWidth="1.700">
              <path d="M1 8Q8 11 15 8M7.500 2Q10.500 8 7.500 14" />
              <path d="M4 5L1 8L4 11M12 5L15 8L12 12M4 3L7 1L10 4M5 12L7 15L11 13" />
            </g>
          </Icon>
          <Caret up color="#fff" />
        </button>
        <button type="button" aria-label="Pan" className="ml-1 flex h-7 w-6 items-center justify-center bg-[#1c4c77]">
          <Icon><path d="M8 1V15M1 8H15M5.500 3.500L8 1L10.500 3.500M5.500 12.500L8 15L10.500 12.500M3.500 5.500L1 8L3.500 10.500M12.500 5.500L15 8L12.500 10.500" stroke="#69bcff" strokeWidth="1.500" /></Icon>
        </button>
        <button type="button" aria-label="Zoom" className="ml-1 flex items-center gap-1">
          <Icon>
            <circle cx="6.500" cy="6.500" r="5.500" fill="#fff" stroke="#bfe0fb" />
            <path d="M10.500 10.500L15 15" stroke="#69bcff" strokeWidth="2.800" />
          </Icon>
          <Caret up color="#fff" />
        </button>
        <button type="button" aria-label="Previous view" className="ml-2">
          <Icon><path d="M0 13L3 5L5 8L15 3L16 6L7 11L9 13Z" fill="#69bcff" /></Icon>
        </button>
        <button type="button" aria-label="Next view" className="ml-2">
          <Icon><path d="M16 3L13 11L11 8.500L1 13L0 10.500L9 5.500L7 3Z" fill="#4f86ba" /></Icon>
        </button>
      </div>
    </footer>
  );
}

export default function App() {
  return (
    <div className={clsx('flex min-h-screen flex-col bg-white', SANS)}>
      <TitleBar />
      <MenuTabs />
      <Ribbon />
      <div className="flex flex-1">
        <SidePanelTabs />
        <Workspace />
      </div>
      <StatusBar />
      <div className="flex h-1 items-end bg-black">
        <div className="ml-12 h-[2px] w-[344px] bg-[#e8e8e8]" />
        <div className="ml-[493px] h-[2px] w-12 bg-[#4a4a4a]" />
      </div>
    </div>
  );
}
